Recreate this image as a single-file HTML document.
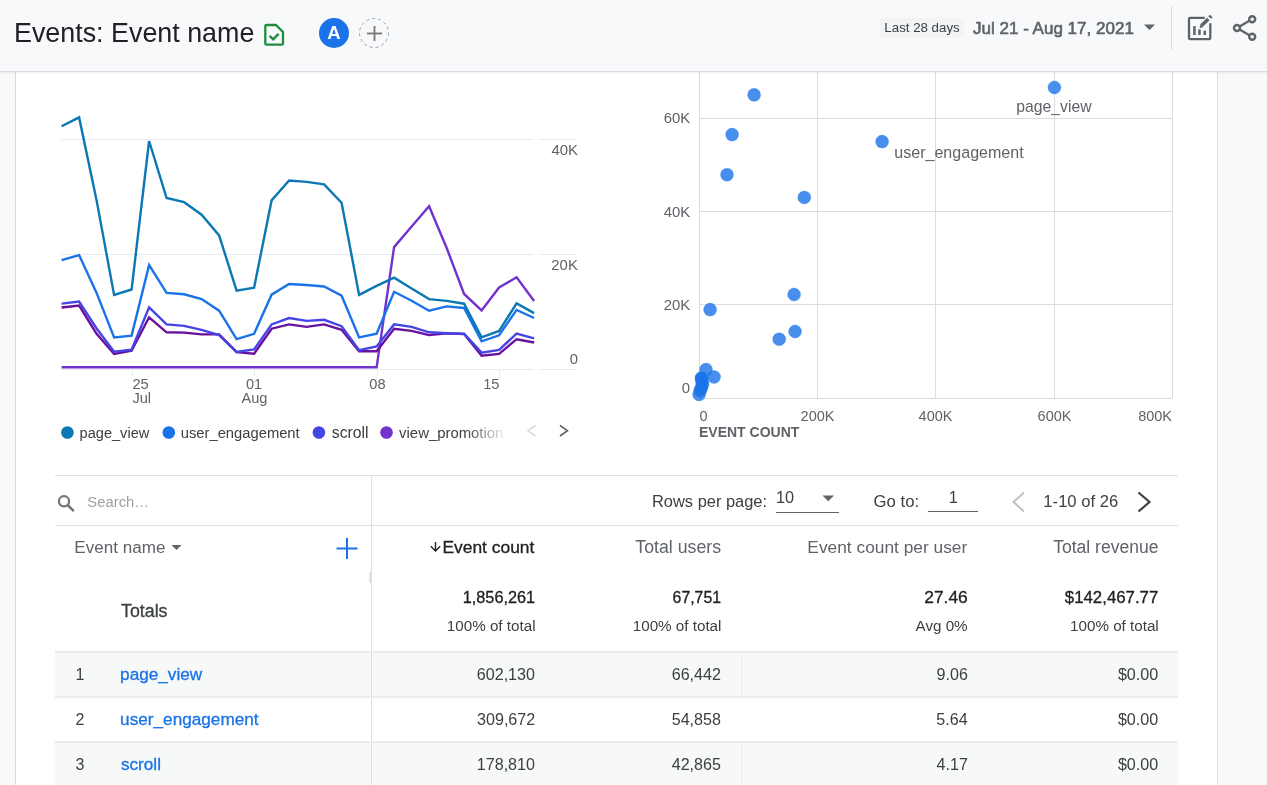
<!DOCTYPE html>
<html><head><meta charset="utf-8"><title>Events: Event name</title>
<style>
html,body{margin:0;padding:0;width:1267px;height:785px;overflow:hidden;background:#f8f9fa;}
svg{display:block;font-family:"Liberation Sans", sans-serif;will-change:transform;}
</style></head><body>
<svg width="1267" height="785" viewBox="0 0 1267 785">
<defs>
<linearGradient id="fade" gradientUnits="userSpaceOnUse" x1="465" y1="0" x2="505" y2="0">
<stop offset="0" stop-color="#3c4043" stop-opacity="1"/><stop offset="1" stop-color="#3c4043" stop-opacity="0.08"/>
</linearGradient>
</defs>
<rect x="0" y="0" width="1267" height="785" fill="#f8f9fa" />
<rect x="15" y="72" width="1203" height="713" fill="#ffffff" />
<line x1="15.5" y1="72" x2="15.5" y2="785" stroke="#dadce0" stroke-width="1" />
<line x1="1217.5" y1="72" x2="1217.5" y2="785" stroke="#dadce0" stroke-width="1" />
<line x1="61" y1="139.5" x2="534" y2="139.5" stroke="#e8eaed" stroke-width="1" />
<line x1="539" y1="139.5" x2="577" y2="139.5" stroke="#e8eaed" stroke-width="1" />
<line x1="61" y1="254.5" x2="534" y2="254.5" stroke="#e8eaed" stroke-width="1" />
<line x1="539" y1="254.5" x2="577" y2="254.5" stroke="#e8eaed" stroke-width="1" />
<line x1="61" y1="369.5" x2="534" y2="369.5" stroke="#e8eaed" stroke-width="1" />
<line x1="539" y1="369.5" x2="577" y2="369.5" stroke="#e8eaed" stroke-width="1" />
<line x1="132.5" y1="369" x2="132.5" y2="376" stroke="#e8eaed" stroke-width="1" />
<line x1="254.5" y1="369" x2="254.5" y2="376" stroke="#e8eaed" stroke-width="1" />
<line x1="377.5" y1="369" x2="377.5" y2="376" stroke="#e8eaed" stroke-width="1" />
<line x1="499.5" y1="369" x2="499.5" y2="376" stroke="#e8eaed" stroke-width="1" />
<text x="551.57" y="154.9" font-size="14.89" fill="#5f6368" font-weight="400"  >40K</text>
<text x="551.30" y="270.4" font-size="14.93" fill="#5f6368" font-weight="400"  >20K</text>
<text x="569.64" y="363.9" font-size="14.80" fill="#5f6368" font-weight="400"  >0</text>
<text x="132.4" y="388.6" font-size="14.6" fill="#5f6368" font-weight="400" text-anchor="start"  >25</text>
<text x="132.4" y="403.1" font-size="14.6" fill="#5f6368" font-weight="400" text-anchor="start"  >Jul</text>
<text x="254" y="388.6" font-size="14.6" fill="#5f6368" font-weight="400" text-anchor="middle"  >01</text>
<text x="254.4" y="403.1" font-size="14.6" fill="#5f6368" font-weight="400" text-anchor="middle"  >Aug</text>
<text x="377.4" y="388.6" font-size="14.6" fill="#5f6368" font-weight="400" text-anchor="middle"  >08</text>
<text x="499.4" y="388.6" font-size="14.6" fill="#5f6368" font-weight="400" text-anchor="end"  >15</text>
<polyline points="61.6,367.3 79.1,367.3 96.6,367.3 114.1,367.3 131.6,367.3 149.1,367.3 166.6,367.3 184.1,367.3 201.6,367.3 219.1,367.3 236.6,367.3 254.1,367.3 271.6,367.3 289.1,367.3 306.6,367.3 324.1,367.3 341.6,367.3 359.1,367.3 376.6,367.3 394.1,247.1 411.6,226.5 429.1,206.2 446.6,247.8 464.1,294 481.6,310.4 499.1,287.5 516.6,277.3 534.1,301" fill="none" stroke="#7232cd" stroke-width="2.4" stroke-linejoin="miter"/>
<polyline points="61.6,307.5 79.1,305.5 96.6,333.8 114.1,354 131.6,350.6 149.1,317.3 166.6,332.3 184.1,332.6 201.6,334.4 219.1,334.4 236.6,352.2 254.1,353.7 271.6,328.7 289.1,324.4 306.6,326.9 324.1,324.4 341.6,329.8 359.1,351.2 376.6,351.2 394.1,328.7 411.6,330.9 429.1,335.1 446.6,333.3 464.1,334.1 481.6,355.7 499.1,353.9 516.6,339.2 534.1,342.5" fill="none" stroke="#6a0f9e" stroke-width="2.4" stroke-linejoin="miter"/>
<polyline points="61.6,303.6 79.1,301.5 96.6,328.5 114.1,351.8 131.6,349.6 149.1,307.3 166.6,324.4 184.1,325.9 201.6,329.8 219.1,335.1 236.6,351.9 254.1,349.4 271.6,324.4 289.1,318 306.6,320.9 324.1,319.8 341.6,326.2 359.1,350.1 376.6,346.5 394.1,324.4 411.6,326.9 429.1,332.3 446.6,333.3 464.1,333.6 481.6,352.6 499.1,349.9 516.6,333.6 534.1,338.4" fill="none" stroke="#4545e6" stroke-width="2.4" stroke-linejoin="miter"/>
<polyline points="61.6,260.1 79.1,255.1 96.6,292.9 114.1,337.5 131.6,335.6 149.1,265.1 166.6,292.9 184.1,294.3 201.6,299.1 219.1,310.7 236.6,339.2 254.1,333.8 271.6,294.7 289.1,284.0 306.6,285.0 324.1,286.5 341.6,295.7 359.1,337.4 376.6,333.8 394.1,291.8 411.6,300.7 429.1,310.7 446.6,306.4 464.1,308.0 481.6,341.4 499.1,335.3 516.6,309.9 534.1,318.0" fill="none" stroke="#1a73e8" stroke-width="2.4" stroke-linejoin="miter"/>
<polyline points="61.6,126.3 79.1,117.4 96.6,200.39999999999998 114.1,294.9 131.6,289.5 149.1,141.0 166.6,198.0 184.1,202.2 201.6,214.7 219.1,235.39999999999998 236.6,290.59999999999997 254.1,287.7 271.6,200.39999999999998 289.1,180.5 306.6,181.89999999999998 324.1,184.39999999999998 341.6,202.7 359.1,294.9 376.6,285.9 394.1,277.7 411.6,288.4 429.1,299.09999999999997 446.6,300.9 464.1,303.7 481.6,337.3 499.1,330.9 516.6,303.4 534.1,313.09999999999997" fill="none" stroke="#0b78b4" stroke-width="2.4" stroke-linejoin="miter"/>
<circle cx="67.4" cy="432.5" r="6.3" fill="#0b78b4"/>
<circle cx="168.8" cy="432.5" r="6.3" fill="#1a73e8"/>
<circle cx="318.9" cy="432.5" r="6.3" fill="#4545e6"/>
<circle cx="386.5" cy="432.5" r="6.3" fill="#7232cd"/>
<text x="79.59" y="438.2" font-size="14.58" fill="#3c4043" font-weight="400"  >page_view</text>
<text x="180.78" y="438.2" font-size="14.75" fill="#3c4043" font-weight="400"  >user_engagement</text>
<text x="331.75" y="438.2" font-size="15.76" fill="#3c4043" font-weight="400"  >scroll</text>
<text x="399.10" y="438.2" font-size="14.90" fill="url(#fade)" font-weight="400"  >view_promotion</text>
<path d="M535.5,425.5 L528,430.7 L535.5,436" fill="none" stroke="#dadce0" stroke-width="1.6"/>
<path d="M560,425.5 L567.5,430.7 L560,436" fill="none" stroke="#5f6368" stroke-width="1.6"/>
<line x1="699.5" y1="72" x2="699.5" y2="398" stroke="#dadce0" stroke-width="1" />
<line x1="817.5" y1="72" x2="817.5" y2="398" stroke="#dadce0" stroke-width="1" />
<line x1="935.5" y1="72" x2="935.5" y2="398" stroke="#dadce0" stroke-width="1" />
<line x1="1054.5" y1="72" x2="1054.5" y2="398" stroke="#dadce0" stroke-width="1" />
<line x1="1172.5" y1="72" x2="1172.5" y2="398" stroke="#dadce0" stroke-width="1" />
<line x1="699.5" y1="118.5" x2="1172.5" y2="118.5" stroke="#dadce0" stroke-width="1" />
<line x1="699.5" y1="211.5" x2="1172.5" y2="211.5" stroke="#dadce0" stroke-width="1" />
<line x1="699.5" y1="304.5" x2="1172.5" y2="304.5" stroke="#dadce0" stroke-width="1" />
<line x1="699.5" y1="398.5" x2="1172.5" y2="398.5" stroke="#dadce0" stroke-width="1" />
<text x="690.2" y="123.4" font-size="14.9" fill="#5f6368" font-weight="400" text-anchor="end"  >60K</text>
<text x="690.2" y="216.6" font-size="14.9" fill="#5f6368" font-weight="400" text-anchor="end"  >40K</text>
<text x="690.2" y="309.8" font-size="14.9" fill="#5f6368" font-weight="400" text-anchor="end"  >20K</text>
<text x="690" y="393.2" font-size="14.9" fill="#5f6368" font-weight="400" text-anchor="end"  >0</text>
<text x="699.6" y="420.5" font-size="14.5" fill="#5f6368" font-weight="400" text-anchor="start"  >0</text>
<text x="817.5" y="420.5" font-size="14.5" fill="#5f6368" font-weight="400" text-anchor="middle"  >200K</text>
<text x="935.5" y="420.5" font-size="14.5" fill="#5f6368" font-weight="400" text-anchor="middle"  >400K</text>
<text x="1054.5" y="420.5" font-size="14.5" fill="#5f6368" font-weight="400" text-anchor="middle"  >600K</text>
<text x="1172" y="420.5" font-size="14.5" fill="#5f6368" font-weight="400" text-anchor="end"  >800K</text>
<text x="699" y="436.6" font-size="14" fill="#5f6368" font-weight="700" text-anchor="start"  >EVENT COUNT</text>
<circle cx="754.1" cy="94.8" r="6.5" fill="#1a73e8" fill-opacity="0.8" stroke="#1a73e8" stroke-opacity="0.35" stroke-width="0.8"/>
<circle cx="732.1" cy="134.6" r="6.5" fill="#1a73e8" fill-opacity="0.8" stroke="#1a73e8" stroke-opacity="0.35" stroke-width="0.8"/>
<circle cx="727" cy="174.7" r="6.5" fill="#1a73e8" fill-opacity="0.8" stroke="#1a73e8" stroke-opacity="0.35" stroke-width="0.8"/>
<circle cx="804.3" cy="197.4" r="6.5" fill="#1a73e8" fill-opacity="0.8" stroke="#1a73e8" stroke-opacity="0.35" stroke-width="0.8"/>
<circle cx="1054.4" cy="87.5" r="6.5" fill="#1a73e8" fill-opacity="0.8" stroke="#1a73e8" stroke-opacity="0.35" stroke-width="0.8"/>
<circle cx="882.1" cy="141.6" r="6.5" fill="#1a73e8" fill-opacity="0.8" stroke="#1a73e8" stroke-opacity="0.35" stroke-width="0.8"/>
<circle cx="710.1" cy="309.6" r="6.5" fill="#1a73e8" fill-opacity="0.8" stroke="#1a73e8" stroke-opacity="0.35" stroke-width="0.8"/>
<circle cx="794.1" cy="294.5" r="6.5" fill="#1a73e8" fill-opacity="0.8" stroke="#1a73e8" stroke-opacity="0.35" stroke-width="0.8"/>
<circle cx="795.1" cy="331.5" r="6.5" fill="#1a73e8" fill-opacity="0.8" stroke="#1a73e8" stroke-opacity="0.35" stroke-width="0.8"/>
<circle cx="779.2" cy="339.2" r="6.5" fill="#1a73e8" fill-opacity="0.8" stroke="#1a73e8" stroke-opacity="0.35" stroke-width="0.8"/>
<circle cx="706" cy="369.6" r="6.5" fill="#1a73e8" fill-opacity="0.8" stroke="#1a73e8" stroke-opacity="0.35" stroke-width="0.8"/>
<circle cx="714.1" cy="377" r="6.5" fill="#1a73e8" fill-opacity="0.8" stroke="#1a73e8" stroke-opacity="0.35" stroke-width="0.8"/>
<circle cx="701.4" cy="378" r="6.5" fill="#1a73e8" fill-opacity="0.8" stroke="#1a73e8" stroke-opacity="0.35" stroke-width="0.8"/>
<circle cx="701.8" cy="378.5" r="6.5" fill="#1a73e8" fill-opacity="0.8" stroke="#1a73e8" stroke-opacity="0.35" stroke-width="0.8"/>
<circle cx="702.6" cy="384.3" r="6.5" fill="#1a73e8" fill-opacity="0.8" stroke="#1a73e8" stroke-opacity="0.35" stroke-width="0.8"/>
<circle cx="702" cy="382" r="6.5" fill="#1a73e8" fill-opacity="0.8" stroke="#1a73e8" stroke-opacity="0.35" stroke-width="0.8"/>
<circle cx="701.4" cy="388.1" r="6.5" fill="#1a73e8" fill-opacity="0.8" stroke="#1a73e8" stroke-opacity="0.35" stroke-width="0.8"/>
<circle cx="700.1" cy="390.7" r="6.5" fill="#1a73e8" fill-opacity="0.8" stroke="#1a73e8" stroke-opacity="0.35" stroke-width="0.8"/>
<circle cx="699.1" cy="394.5" r="6.5" fill="#1a73e8" fill-opacity="0.8" stroke="#1a73e8" stroke-opacity="0.35" stroke-width="0.8"/>
<text x="1016.32" y="111.8" font-size="15.75" fill="#5f6368" font-weight="400"  >page_view</text>
<text x="894.30" y="157.6" font-size="16.06" fill="#5f6368" font-weight="400"  >user_engagement</text>
<rect x="0" y="0" width="1267" height="71" fill="#f8f9fa" />
<rect x="0" y="71" width="1267" height="1" fill="#dadce0" />
<rect x="0" y="72" width="1267" height="2" fill="rgba(0,0,0,0.04)" />
<text x="14.00" y="42.4" font-size="26.87" fill="#202124" font-weight="400"  >Events: Event name</text>
<path d="M265.3,26.2 Q265.3,25 266.5,25 H276 L283,32 V43.4 Q283,44.6 281.8,44.6 H266.5 Q265.3,44.6 265.3,43.4 Z" fill="none" stroke="#1e8e3e" stroke-width="2.3" stroke-linejoin="round"/>
<path d="M269.6,35.8 L273.2,39.4 L278.6,33.8" fill="none" stroke="#1e8e3e" stroke-width="2.4"/>
<circle cx="334" cy="33" r="15" fill="#1a73e8"/>
<text x="334" y="39.1" font-size="18.5" fill="#ffffff" font-weight="700" text-anchor="middle"  >A</text>
<circle cx="374" cy="33" r="14.5" fill="none" stroke="#9aa0a6" stroke-width="1" stroke-dasharray="3,3"/>
<line x1="367" y1="33.5" x2="382" y2="33.5" stroke="#757575" stroke-width="1.8" />
<line x1="374.5" y1="26" x2="374.5" y2="41" stroke="#757575" stroke-width="1.8" />
<rect x="880" y="18" width="84" height="20" fill="#f1f3f4" />
<text x="884.36" y="31.8" font-size="13.29" fill="#3c4043" font-weight="400"  >Last 28 days</text>
<text x="973.03" y="33.7" font-size="17.03" fill="#5f6368" font-weight="400" stroke="#5f6368" stroke-width="0.6" >Jul 21 - Aug 17, 2021</text>
<path d="M1144,24.5 h11 l-5.5,5.5 z" fill="#5f6368"/>
<line x1="1171.5" y1="6" x2="1171.5" y2="50" stroke="#dadce0" stroke-width="1" />
<path d="M1204.8,17.8 H1190.3 Q1189,17.8 1189,19.1 V37.9 Q1189,39.2 1190.3,39.2 H1209 Q1210.3,39.2 1210.3,37.9 V23.3" fill="none" stroke="#5f6368" stroke-width="2.3"/>
<rect x="1193.2" y="26.1" width="2.5" height="8.9" fill="#5f6368" />
<rect x="1198.2" y="29.4" width="2.5" height="5.6" fill="#5f6368" />
<rect x="1203.5" y="30.7" width="2.5" height="4.3" fill="#5f6368" />
<path d="M1201.6,25.6 L1208.3,18.9" stroke="#5f6368" stroke-width="3.6" fill="none"/>
<path d="M1199.6,28 L1200.3,24.3 L1203.3,27.3 Z" fill="#5f6368"/>
<path d="M1209.6,17.6 L1211.2,16" stroke="#5f6368" stroke-width="3.6" fill="none"/>
<path d="M1237,28 L1252,19.3 M1237,28 L1252,36.7" stroke="#5f6368" stroke-width="2.2" fill="none"/>
<circle cx="1252.2" cy="19.3" r="3.0" fill="#f8f9fa" stroke="#5f6368" stroke-width="2.4"/>
<circle cx="1237" cy="28" r="3.0" fill="#f8f9fa" stroke="#5f6368" stroke-width="2.4"/>
<circle cx="1252.2" cy="36.7" r="3.0" fill="#f8f9fa" stroke="#5f6368" stroke-width="2.4"/>
<rect x="55" y="475" width="1123" height="1" fill="#e0e0e0" />
<rect x="55" y="525" width="1123" height="1" fill="#e0e0e0" />
<rect x="371" y="475" width="1" height="310" fill="#e0e0e0" />
<circle cx="64" cy="501.3" r="5.1" fill="none" stroke="#70757a" stroke-width="2.2"/>
<line x1="67.6" y1="505" x2="73.8" y2="511.2" stroke="#70757a" stroke-width="2.5" />
<text x="87.34" y="507" font-size="14.85" fill="#9aa0a6" font-weight="400"  >Search…</text>
<text x="652.02" y="506.7" font-size="16.43" fill="#3c4043" font-weight="400"  >Rows per page:</text>
<text x="775.98" y="502.6" font-size="16.30" fill="#3c4043" font-weight="400"  >10</text>
<path d="M822.5,495.5 h11.5 l-5.75,5.75 z" fill="#5f6368"/>
<rect x="776" y="512" width="63" height="1" fill="#5f6368" />
<text x="873.62" y="507" font-size="16.70" fill="#3c4043" font-weight="400"  >Go to:</text>
<text x="948.68" y="503.2" font-size="16.30" fill="#3c4043" font-weight="400"  >1</text>
<rect x="928" y="511" width="50" height="1" fill="#5f6368" />
<path d="M1024,492.5 L1013.5,502 L1024,511.5" fill="none" stroke="#bdc1c6" stroke-width="2"/>
<text x="1043.36" y="507" font-size="16.63" fill="#3c4043" font-weight="400"  >1-10 of 26</text>
<path d="M1138.5,492.5 L1149.5,502 L1138.5,511.5" fill="none" stroke="#3c4043" stroke-width="2.2"/>
<text x="74.37" y="553" font-size="17.08" fill="#5f6368" font-weight="400"  >Event name</text>
<path d="M171.5,545 h10 l-5,5 z" fill="#5f6368"/>
<line x1="336.5" y1="548.5" x2="357.5" y2="548.5" stroke="#1a73e8" stroke-width="2" />
<line x1="347" y1="538" x2="347" y2="559" stroke="#1a73e8" stroke-width="2" />
<rect x="369.5" y="572" width="2" height="11" fill="#dadce0" />
<path d="M435.5,541.9 V551 M430.8,546.3 L435.5,551 L440.2,546.3" fill="none" stroke="#202124" stroke-width="1.4"/>
<text x="442.49" y="553.4" font-size="17.40" fill="#202124" font-weight="400" stroke="#202124" stroke-width="0.3" >Event count</text>
<text x="635.32" y="553.4" font-size="17.73" fill="#5f6368" font-weight="400"  >Total users</text>
<text x="807.35" y="553.4" font-size="17.33" fill="#5f6368" font-weight="400"  >Event count per user</text>
<text x="1053.23" y="553.4" font-size="17.54" fill="#5f6368" font-weight="400"  >Total revenue</text>
<text x="121.07" y="617.2" font-size="17.77" fill="#3c4043" font-weight="400" stroke="#3c4043" stroke-width="0.3" >Totals</text>
<text x="462.73" y="603" font-size="16.27" fill="#202124" font-weight="400" stroke="#202124" stroke-width="0.3" >1,856,261</text>
<text x="446.87" y="630.8" font-size="15.20" fill="#3c4043" font-weight="400"  >100% of total</text>
<text x="672.61" y="603" font-size="15.82" fill="#202124" font-weight="400" stroke="#202124" stroke-width="0.3" >67,751</text>
<text x="632.77" y="630.8" font-size="15.20" fill="#3c4043" font-weight="400"  >100% of total</text>
<text x="924.34" y="603" font-size="17.35" fill="#202124" font-weight="400" stroke="#202124" stroke-width="0.3" >27.46</text>
<text x="915.54" y="630.8" font-size="15.20" fill="#3c4043" font-weight="400"  >Avg 0%</text>
<text x="1064.85" y="603" font-size="16.81" fill="#202124" font-weight="400" stroke="#202124" stroke-width="0.3" >$142,467.77</text>
<text x="1070.07" y="630.8" font-size="15.20" fill="#3c4043" font-weight="400"  >100% of total</text>
<rect x="55" y="652" width="1123" height="45" fill="#f7f8f8" />
<rect x="741.5" y="652" width="1" height="45" fill="#e8eaed" />
<rect x="55" y="651" width="315" height="2" fill="#ebebeb" />
<rect x="372" y="651" width="806" height="2" fill="#ebebeb" />
<text x="75.5" y="680.3" font-size="16" fill="#3c4043" font-weight="400" text-anchor="start"  >1</text>
<text x="120.08" y="680.3" font-size="17.20" fill="#1a73e8" font-weight="400" stroke="#1a73e8" stroke-width="0.3" >page_view</text>
<text x="476.80" y="680.3" font-size="16.10" fill="#3c4043" font-weight="400"  >602,130</text>
<text x="671.71" y="680.3" font-size="16.10" fill="#3c4043" font-weight="400"  >66,442</text>
<text x="936.52" y="680.3" font-size="16.10" fill="#3c4043" font-weight="400"  >9.06</text>
<text x="1117.91" y="680.3" font-size="16.10" fill="#3c4043" font-weight="400"  >$0.00</text>
<rect x="55" y="696" width="315" height="2" fill="#ebebeb" />
<rect x="372" y="696" width="806" height="2" fill="#ebebeb" />
<text x="75.5" y="725.3" font-size="16" fill="#3c4043" font-weight="400" text-anchor="start"  >2</text>
<text x="120.08" y="725.3" font-size="17.20" fill="#1a73e8" font-weight="400" stroke="#1a73e8" stroke-width="0.3" >user_engagement</text>
<text x="477.06" y="725.3" font-size="16.10" fill="#3c4043" font-weight="400"  >309,672</text>
<text x="671.71" y="725.3" font-size="16.10" fill="#3c4043" font-weight="400"  >54,858</text>
<text x="936.27" y="725.3" font-size="16.10" fill="#3c4043" font-weight="400"  >5.64</text>
<text x="1117.91" y="725.3" font-size="16.10" fill="#3c4043" font-weight="400"  >$0.00</text>
<rect x="55" y="742" width="1123" height="45" fill="#f7f8f8" />
<rect x="741.5" y="742" width="1" height="45" fill="#e8eaed" />
<rect x="55" y="741" width="315" height="2" fill="#ebebeb" />
<rect x="372" y="741" width="806" height="2" fill="#ebebeb" />
<text x="75.5" y="770.3" font-size="16" fill="#3c4043" font-weight="400" text-anchor="start"  >3</text>
<text x="120.88" y="770.3" font-size="17.20" fill="#1a73e8" font-weight="400" stroke="#1a73e8" stroke-width="0.3" >scroll</text>
<text x="476.80" y="770.3" font-size="16.10" fill="#3c4043" font-weight="400"  >178,810</text>
<text x="671.71" y="770.3" font-size="16.10" fill="#3c4043" font-weight="400"  >42,865</text>
<text x="936.52" y="770.3" font-size="16.10" fill="#3c4043" font-weight="400"  >4.17</text>
<text x="1117.91" y="770.3" font-size="16.10" fill="#3c4043" font-weight="400"  >$0.00</text>
<rect x="371" y="652" width="1" height="133" fill="#e0e0e0" />
</svg>
</body></html>
